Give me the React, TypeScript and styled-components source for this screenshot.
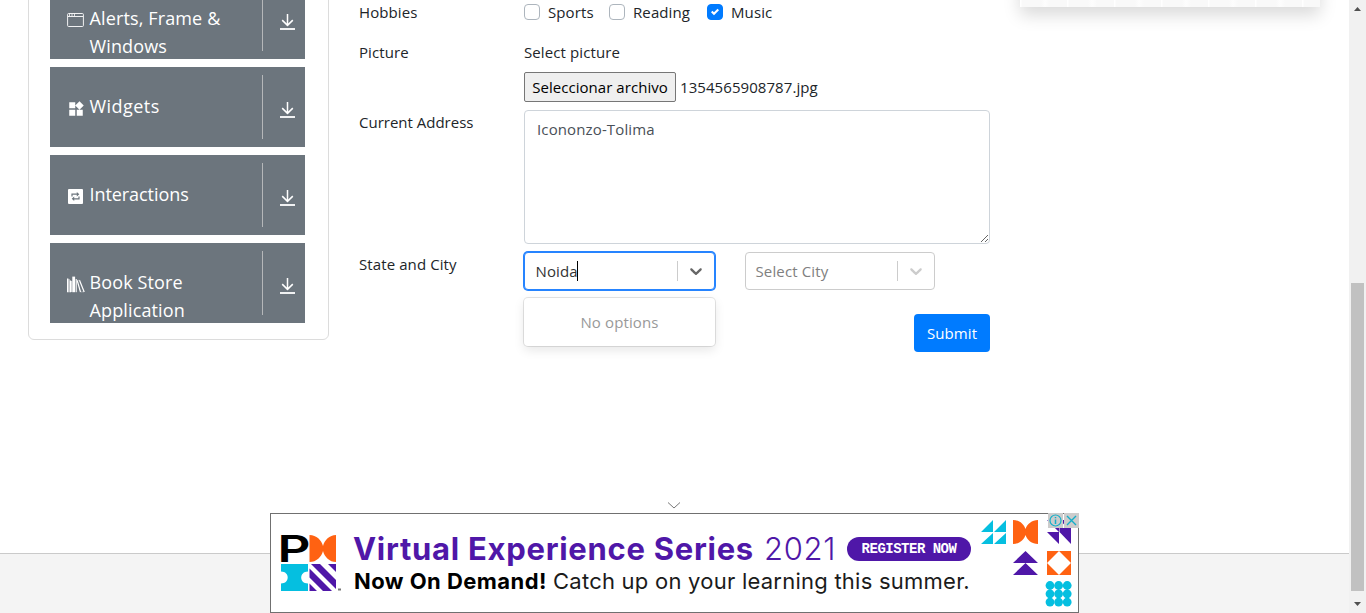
import React from "react";
import styled, { createGlobalStyle, css } from "styled-components";
import { MdWidgets } from "react-icons/md";

const GlobalStyle = createGlobalStyle`
  *, *::before, *::after { box-sizing: border-box; }
  body {
    margin: 0;
    overflow: hidden;
    background: #fff;
    color: #212529;
    font: 15px/24px "Open Sans", "Noto Sans", sans-serif;
  }
`;

const Screen = styled.div`
  position: relative;
  display: flex;
  height: 613px;
  overflow: hidden;
`;

const Page = styled.div`
  flex: 1;
  display: flex;
  flex-direction: column;
  min-width: 0;
`;

const Main = styled.main`
  display: flex;
  align-items: flex-start;
  height: 553px;
  padding-left: 28px;
`;

const Footer = styled.footer`
  flex: 1;
  background: #f4f4f4;
  border-top: 1px solid #cacaca;
`;

/* Sidebar */

const Sidebar = styled.nav`
  display: flex;
  flex-direction: column;
  gap: 8px;
  width: 301px;
  height: 370px;
  margin-top: -30px;
  padding: 8px 23px 16px 21px;
  border: 1px solid #dcdcdc;
  border-radius: 6px;
`;

const MenuItem = styled.div`
  display: flex;
  height: 80px;
  background: #6c757d;
  color: #fff;
`;

const MenuLabel = styled.div`
  display: flex;
  width: 213px;
  height: 64px;
  margin-top: 8px;
  padding: 17px 30px 0 17px;
  border-right: 1px solid #b5b7b9;
`;

const MenuIcon = styled.span`
  display: flex;
  flex: none;
  width: 22.5px;
  padding-top: 8px;
`;

const MenuText = styled.span<{ $spacing?: number }>`
  font-size: 18px;
  line-height: 28px;
  letter-spacing: ${(p) => p.$spacing ?? 0}px;
`;

const MenuArrow = styled.span`
  padding: 35px 0 0 17px;
  line-height: 0;
`;

/* Form */

const Form = styled.form`
  display: flex;
  flex-direction: column;
  width: 631px;
  margin-left: 30px;
`;

const Row = styled.div<{ $height: number }>`
  display: grid;
  grid-template-columns: 165px 466px;
  height: ${(p) => p.$height}px;
`;

const Label = styled.label<{ $top?: number; $spacing?: number }>`
  padding-top: ${(p) => p.$top ?? 0}px;
  letter-spacing: ${(p) => p.$spacing ?? 0.1}px;
  white-space: nowrap;
`;

const Checks = styled.div`
  display: flex;
  align-items: flex-start;
`;

const Check = styled.label<{ $width: number }>`
  display: flex;
  gap: 8px;
  width: ${(p) => p.$width}px;
  letter-spacing: 0.1px;
`;

const CheckBox = styled.span<{ $on?: boolean }>`
  display: flex;
  align-items: center;
  justify-content: center;
  flex: none;
  width: 16px;
  height: 16px;
  margin-top: 4px;
  border: 1px solid #adb5bd;
  border-radius: 4px;
  ${(p) => p.$on && css`
    background: #007bff;
    border-color: #007bff;
  `}
`;

const FileRow = styled.div`
  display: flex;
  align-items: center;
  gap: 4px;
  margin-top: 8px;
`;

const FileButton = styled.button`
  width: 152px;
  height: 30px;
  padding: 0;
  border: 1px solid #767676;
  border-radius: 2px;
  background: #efefef;
  color: #000;
  font: inherit;
  letter-spacing: 0.05px;
  white-space: nowrap;
`;

const FileName = styled.span`
  letter-spacing: 0.07px;
  white-space: nowrap;
`;

const Address = styled.textarea`
  display: block;
  width: 466px;
  height: 134px;
  padding: 6px 12px;
  border: 1px solid #ced4da;
  border-radius: 4px;
  background: #fff;
  color: #495057;
  font: inherit;
  letter-spacing: 0.13px;
  outline: none;
  resize: vertical;
`;

const Selects = styled.div`
  display: flex;
  gap: 30px;
  padding-top: 8px;
`;

const SelectColumn = styled.div`
  display: flex;
  flex-direction: column;
  gap: 8px;
  width: 191px;
  letter-spacing: 0.13px;
`;

const Control = styled.div<{ $focus?: boolean }>`
  display: flex;
  align-items: center;
  height: 38px;
  width: ${(p) => (p.$focus ? 191 : 190)}px;
  border: 1px solid ${(p) => (p.$focus ? "#2684ff" : "#ccc")};
  border-radius: 4px;
  box-shadow: ${(p) => (p.$focus ? "0 0 0 1px #2684ff" : "none")};
  background: #fff;
`;

const Value = styled.span<{ $muted?: boolean }>`
  display: flex;
  align-items: center;
  flex: 1;
  padding-left: ${(p) => (p.$muted ? 9.5 : 10.5)}px;
  color: ${(p) => (p.$muted ? "#808080" : "#333")};
`;

const Caret = styled.i`
  width: 1px;
  height: 20px;
  margin-left: -0.5px;
  background: #000;
`;

const Separator = styled.span`
  width: 1px;
  height: 20px;
  background: #ccc;
`;

const Indicator = styled.span<{ $strong?: boolean }>`
  display: flex;
  padding: 8px;
  color: ${(p) => (p.$strong ? "#666" : "#ccc")};
`;

const Menu = styled.div`
  display: flex;
  align-items: center;
  justify-content: center;
  height: 48px;
  border-radius: 4px;
  background: #fff;
  box-shadow: 0 0 0 1px rgba(0, 0, 0, 0.1), 0 4px 11px rgba(0, 0, 0, 0.1);
  color: #999;
`;

const Submit = styled.button`
  align-self: flex-end;
  width: 76px;
  height: 38px;
  padding: 0;
  border: 0;
  border-radius: 4px;
  background: #007bff;
  color: #fff;
  font: inherit;
  letter-spacing: 0.1px;
`;

const SidePicture = styled.div`
  width: 300px;
  height: 250px;
  margin: -243px 0 0 30px;
  background: repeating-linear-gradient(90deg, #fff 0 1px, #f9f9f9 2px 21px, #fdfdfd 25px, #f9f9f9 30px 47px);
  box-shadow: 0 8px 16px rgba(0, 0, 0, 0.15);
`;

/* Scrollbar */

const Track = styled.div`
  display: flex;
  flex-direction: column;
  align-items: center;
  width: 17px;
  background: #f1f1f1;
`;

const Thumb = styled.div`
  width: 13px;
  height: 308px;
  margin: 272px 0 11px;
  background: #c1c1c1;
`;

const ScrollArrow = styled.i<{ $down?: boolean }>`
  width: 7px;
  height: 4px;
  margin-top: ${(p) => (p.$down ? 0 : 7)}px;
  background: #505050;
  clip-path: ${(p) => (p.$down ? "polygon(0 0, 100% 0, 50% 100%)" : "polygon(0 100%, 100% 100%, 50% 0)")};
`;

/* Banner */

const BannerDock = styled.aside`
  position: absolute;
  left: 270px;
  bottom: 0;
  display: flex;
  flex-direction: column;
  align-items: center;
  width: 809px;
`;

const CollapseIcon = styled.span`
  height: 13px;
  padding-right: 2px;
  line-height: 0;
`;

const Banner = styled.div`
  position: relative;
  display: flex;
  width: 809px;
  height: 100px;
  padding-left: 4px;
  border: 1px solid #707070;
  background: #fff;
  font-family: Inter, sans-serif;
`;

const Copy = styled.div`
  display: flex;
  flex-direction: column;
  width: 638px;
  padding: 17px 0 0 13px;
  white-space: nowrap;
`;

const Headline = styled.div`
  display: flex;
  align-items: center;
  height: 36px;
  color: #4f17a8;
  font-size: 31px;
  line-height: 36px;
`;

const Title = styled.strong`
  width: 410px;
  margin-left: -1px;
  margin-right: 1px;
  font-weight: 700;
  letter-spacing: 0.72px;
`;

const Year = styled.span`
  width: 83px;
  font-weight: 300;
  letter-spacing: 0.7px;
`;

const Pill = styled.span`
  width: 124px;
  height: 24px;
  border-radius: 12px;
  background: #4f17a8;
  color: #fff;
  font: bold 14px/24px "Liberation Mono", monospace;
  letter-spacing: -0.5px;
  text-align: center;
`;

const Subline = styled.div`
  display: flex;
  height: 28px;
  color: #1b1b1b;
  font-size: 22px;
  line-height: 28px;
`;

const Lead = styled.strong`
  width: 199px;
  color: #000;
  font-weight: 700;
  letter-spacing: 0.45px;
`;

const Rest = styled.span`
  font-weight: 400;
  letter-spacing: 0.24px;
`;

const AdChoices = styled.div`
  position: absolute;
  top: -1px;
  right: -1px;
  display: flex;
  gap: 1px;
`;

const AdBadge = styled.span`
  display: flex;
  width: 15px;
  height: 15px;
  background: #ccc;
`;

const DownloadIcon = () => (
  <svg width="15" height="16" viewBox="0 0 15 16" fill="none" stroke="#fff" strokeWidth="1.5">
    <path d="M7.5 0v11M2.2 6.1l5.3 5.3 5.3-5.3" strokeLinejoin="round" />
    <path d="M0 15h15" strokeWidth="1.8" />
  </svg>
);

const WindowIcon = () => (
  <svg width="17" height="16" viewBox="0 0 17 16" fill="none" stroke="#fff">
    <rect x=".6" y="1.5" width="15.8" height="13" rx="1" opacity=".9" />
    <path d="M1 4.5h15" opacity=".9" />
    <path d="M2 3h1M4.5 3h1M7 3h1" strokeWidth="1.4" />
  </svg>
);

const LoopIcon = () => (
  <svg width="17" height="17" viewBox="0 0 17 17">
    <rect x="1" y="1" width="15" height="15" rx="1" fill="#fff" />
    <path d="M5 8.5V6.2h5M12 8.5v2.3H7" fill="none" stroke="#6c757d" strokeWidth="1.2" />
    <path d="M9.8 4 12.3 6.2 9.8 8.4zM7.2 8.6 4.7 10.8 7.2 13z" fill="#6c757d" />
  </svg>
);

const BooksIcon = () => (
  <svg width="18" height="17" viewBox="0 0 18 17" fill="none" stroke="#fff">
    <path d="M.7 2.5v13.7M3.4 4.5v11.7" strokeWidth="1.4" />
    <path d="M2 3v13.2M4.6 5v11" strokeWidth="1.2" opacity=".65" />
    <path d="M6.7.6v15.6" strokeWidth="2.8" />
    <path d="M9.3 3v13.2" strokeWidth="1.5" opacity=".75" />
    <path d="m10.2 4.5 3.3 11.5M12.5 4.2 17.2 16" strokeWidth="1.2" />
    <path d="m10.2 4.5 2.3-.3M13.6 16l3.6-.4" strokeWidth=".7" opacity=".5" />
  </svg>
);

const ChevronIcon = () => (
  <svg width="20" height="20" viewBox="0 0 20 20" fill="currentColor">
    <path d="M4.516 7.548c0.436-0.446 1.043-0.481 1.576 0l3.908 3.747 3.908-3.747c0.533-0.481 1.141-0.446 1.574 0 0.436 0.445 0.408 1.197 0 1.615-0.406 0.418-4.695 4.502-4.695 4.502-0.217 0.223-0.502 0.335-0.787 0.335s-0.57-0.112-0.789-0.335c0 0-4.287-4.084-4.695-4.502s-0.436-1.17 0-1.615z" />
  </svg>
);

const BrandMark = () => (
  <svg width="66" height="98" viewBox="275 514 66 98">
    <text x="277.5" y="562" fontFamily="Inter, sans-serif" fontWeight="600" fontSize="37" textLength="33" lengthAdjust="spacingAndGlyphs">P</text>
    <path d="M309.5 535c7 0 12 5 13.5 11 1.5-6 6.5-11 13-11v27c-6.5 0-11.5-5-13-11-1.5 6-6.5 11-13.5 11z" fill="#ff6212" />
    <path d="M281 564h27v7.5c-9 0-9 12 0 12v7.5h-27v-7.5c9 0 9-12 0-12z" fill="#05bfe0" />
    <path d="M311 564h9l16 16v9zM328 564h8v8zM309.5 568.5 332 591h-9l-13.5-13.5zM309.5 583.5l7.5 7.5h-7.5z" fill="#4f17a8" />
    <path d="M338 588.5h3v2h-3z" fill="#777" />
  </svg>
);

const dots = [0, 1, 2].flatMap((r) => [0, 1, 2].map((c) => [1050 + c * 8.6, 585.5 + r * 8.3]));

const Pattern = () => (
  <svg width="99" height="98" viewBox="979 514 99 98">
    <path d="M981 532l12-12v12zM994 532l12-12v12zM981 544l12-11v11zM994 544l12-11v11z" fill="#05bfe0" />
    <path d="M1013 520c6 0 11 4 12.5 9 1.5-5 6.5-9 12.5-9v24c-6 0-11-4-12.5-9-1.5 5-6.5 9-12.5 9zM1047 551h24v24h-24z" fill="#ff6212" />
    <path d="m1059 551 12 12-12 12-12-12z" fill="#fff" />
    <path d="M1047 520h12v12zM1060 520h11v12zM1047 532h12v12zM1059.5 532v-4h11.5v16zM1013 563l12.5-12 12.5 12zM1013 575l12.5-12 12.5 12z" fill="#4f17a8" />
    {dots.map(([x, y]) => <circle key={`${x}-${y}`} cx={x} cy={y} r="4.4" fill="#05bfe0" />)}
  </svg>
);

const menu = [
  { text: "Alerts, Frame & Windows", icon: <WindowIcon />, spacing: 0.13 },
  { text: "Widgets", icon: <MdWidgets size={18} />, spacing: 0.45 },
  { text: "Interactions", icon: <LoopIcon />, spacing: -0.07 },
  { text: "Book Store Application", icon: <BooksIcon />, spacing: 0.13 },
];

export default function App() {
  return (
    <Screen>
      <GlobalStyle />
      <Page>
        <Main>
          <Sidebar>
            {menu.map((m) => (
              <MenuItem key={m.text}>
                <MenuLabel>
                  <MenuIcon>{m.icon}</MenuIcon>
                  <MenuText $spacing={m.spacing}>{m.text}</MenuText>
                </MenuLabel>
                <MenuArrow><DownloadIcon /></MenuArrow>
              </MenuItem>
            ))}
          </Sidebar>
          <Form>
            <Row $height={40}>
              <Label>Hobbies</Label>
              <Checks>
                <Check $width={85}><CheckBox />Sports</Check>
                <Check $width={98}><CheckBox />Reading</Check>
                <Check $width={80}>
                  <CheckBox $on>
                    <svg width="8" height="8" viewBox="0 0 8 8" fill="#fff">
                      <path d="M6.564.75l-3.59 3.612-1.538-1.55L0 4.26 2.974 7.25 8 2.193z" />
                    </svg>
                  </CheckBox>
                  Music
                </Check>
              </Checks>
            </Row>
            <Row $height={70}>
              <Label>Picture</Label>
              <div>
                <Label as="div">Select picture</Label>
                <FileRow>
                  <FileButton type="button">Seleccionar archivo</FileButton>
                  <FileName>1354565908787.jpg</FileName>
                </FileRow>
              </div>
            </Row>
            <Row $height={134}>
              <Label $spacing={0}>Current Address</Label>
              <Address defaultValue="Icononzo-Tolima" />
            </Row>
            <Row $height={70}>
              <Label $top={8}>State and City</Label>
              <Selects>
                <SelectColumn>
                  <Control $focus>
                    <Value>Noida<Caret /></Value>
                    <Separator />
                    <Indicator $strong><ChevronIcon /></Indicator>
                  </Control>
                  <Menu>No options</Menu>
                </SelectColumn>
                <SelectColumn>
                  <Control>
                    <Value $muted>Select City</Value>
                    <Separator />
                    <Indicator><ChevronIcon /></Indicator>
                  </Control>
                </SelectColumn>
              </Selects>
            </Row>
            <Submit type="button">Submit</Submit>
          </Form>
          <SidePicture />
        </Main>
        <Footer />
      </Page>
      <Track>
        <ScrollArrow />
        <Thumb />
        <ScrollArrow $down />
      </Track>
      <BannerDock>
        <CollapseIcon>
          <svg width="14" height="10" viewBox="0 0 14 10" fill="none" stroke="#777">
            <path d="m1 2.5 6 5.5 6-5.5" />
          </svg>
        </CollapseIcon>
        <Banner>
          <BrandMark />
          <Copy>
            <Headline>
              <Title>Virtual Experience Series</Title>
              <Year>2021</Year>
              <Pill>REGISTER NOW</Pill>
            </Headline>
            <Subline>
              <Lead>Now On Demand!</Lead>
              <Rest>Catch up on your learning this summer.</Rest>
            </Subline>
          </Copy>
          <Pattern />
          <AdChoices>
            <AdBadge>
              <svg width="15" height="15" viewBox="0 0 15 15" fill="none" stroke="#12afc9" strokeWidth="1.2">
                <circle cx="7.5" cy="7.5" r="5.5" />
                <path d="M7.5 6.5v4.5M7.5 4v1.3" strokeWidth="1.5" />
              </svg>
            </AdBadge>
            <AdBadge>
              <svg width="15" height="15" viewBox="0 0 15 15" stroke="#12afc9" strokeWidth="1.4">
                <path d="m3 3 9 9M12 3l-9 9" />
              </svg>
            </AdBadge>
          </AdChoices>
        </Banner>
      </BannerDock>
    </Screen>
  );
}
